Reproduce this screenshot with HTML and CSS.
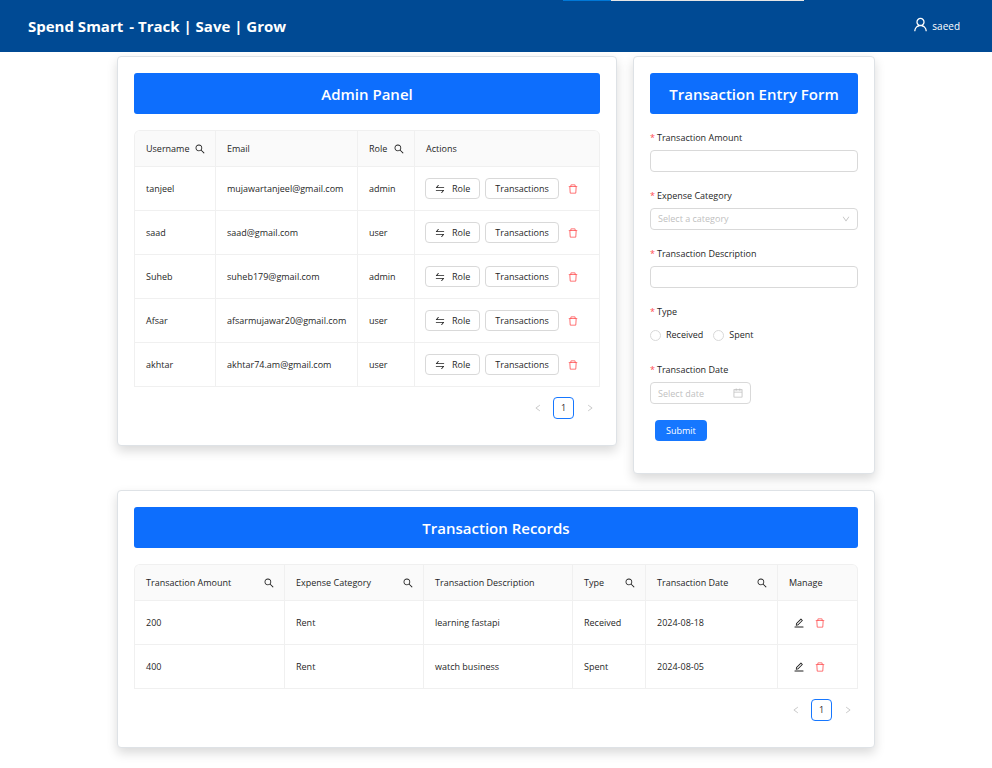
FILE: index.html
```html
<!DOCTYPE html>
<html lang="en">
<head>
<meta charset="utf-8">
<meta name="viewport" content="width=device-width, initial-scale=1">
<title>Spend Smart</title>
<link rel="stylesheet" href="styles.css">
</head>
<body>
<svg class="sprite" aria-hidden="true">
  <symbol id="search" viewBox="64 64 896 896"><path d="M909.6 854.5L649.9 594.8C690.2 542.7 712 479 712 412c0-80.2-31.3-155.4-87.9-212.1-56.6-56.7-132-87.9-212.1-87.9s-155.5 31.3-212.1 87.9C143.2 256.5 112 331.8 112 412c0 80.1 31.3 155.5 87.9 212.1C256.5 680.8 331.8 712 412 712c67 0 130.6-21.8 182.7-62l259.7 259.6a8.2 8.2 0 0011.6 0l43.6-43.5a8.2 8.2 0 000-11.6zM570.4 570.4C528 612.7 471.8 636 412 636s-116-23.3-158.4-65.6C211.3 528 188 471.8 188 412s23.3-116.1 65.6-158.4C296 211.3 352.2 188 412 188s116.1 23.2 158.4 65.6S636 352.2 636 412s-23.3 116.1-65.6 158.4z"/></symbol>
  <symbol id="trash" viewBox="64 64 896 896"><path d="M360 184h-8c4.4 0 8-3.6 8-8v8h304v-8c0 4.4 3.6 8 8 8h-8v72h72v-80c0-35.3-28.7-64-64-64H352c-35.3 0-64 28.7-64 64v80h72v-72zm504 72H160c-17.7 0-32 14.3-32 32v32c0 4.4 3.6 8 8 8h60.4l24.7 523c1.6 34.1 29.8 61 63.9 61h454c34.2 0 62.3-26.8 63.9-61l24.7-523H888c4.4 0 8-3.6 8-8v-32c0-17.7-14.3-32-32-32zM731.3 840H292.7l-24.2-512h487l-24.2 512z"/></symbol>
  <symbol id="swap" viewBox="64 64 896 896"><path d="M847.9 592H152c-4.4 0-8 3.6-8 8v60c0 4.4 3.6 8 8 8h605.2L612.9 851c-4.1 5.2-.4 13 6.3 13h72.5c4.9 0 9.5-2.2 12.6-6.1l168.8-214.1c16.5-21 1.6-51.8-25.2-51.8zM872 356H266.8l144.3-183c4.1-5.2.4-13-6.3-13h-72.5c-4.9 0-9.5 2.2-12.6 6.1L150.9 380.2c-16.5 21-1.6 51.8 25.1 51.8h696c4.4 0 8-3.6 8-8v-60c0-4.4-3.6-8-8-8z"/></symbol>
  <symbol id="edit" viewBox="64 64 896 896"><path d="M257.7 752c2 0 4-.2 6-.5L431.9 722c2-.4 3.9-1.3 5.3-2.8l423.9-423.9a9.96 9.96 0 000-14.1L694.9 114.9c-1.9-1.9-4.4-2.9-7.1-2.9s-5.2 1-7.1 2.9L256.8 538.8c-1.5 1.5-2.4 3.3-2.8 5.3l-29.5 168.2a33.5 33.5 0 009.4 29.8c6.6 6.4 14.9 9.9 23.8 9.9zm67.4-174.4L687.8 215l73.3 73.3-362.7 362.6-88.9 15.7 15.6-89zM880 836H144c-17.7 0-32 14.3-32 32v36c0 4.4 3.6 8 8 8h784c4.4 0 8-3.6 8-8v-36c0-17.7-14.3-32-32-32z"/></symbol>
  <symbol id="user" viewBox="64 64 896 896"><path d="M858.5 763.6a374 374 0 00-80.6-119.5 375.63 375.63 0 00-119.5-80.6c-.4-.2-.8-.3-1.2-.5C719.5 518 760 444.7 760 362c0-137-111-248-248-248S264 225 264 362c0 82.7 40.5 156 102.8 201.1-.4.2-.8.3-1.2.5-44.8 18.9-85 46-119.5 80.6a375.63 375.63 0 00-80.6 119.5A371.7 371.7 0 00136 901.8a8 8 0 008 8.2h60c4.4 0 7.9-3.5 8-7.8 2-77.2 33-149.5 87.8-204.3 56.7-56.7 132-87.9 212.2-87.9s155.5 31.2 212.2 87.9C779 752.7 810 825 812 902.2c.1 4.4 3.6 7.8 8 7.8h60a8 8 0 008-8.2c-1-47.8-10.9-94.3-29.5-138.2zM512 534c-45.9 0-89.1-17.9-121.6-50.4S340 407.9 340 362c0-45.9 17.9-89.1 50.4-121.6S466.1 190 512 190s89.1 17.9 121.6 50.4S684 316.1 684 362c0 45.9-17.9 89.1-50.4 121.6S557.9 534 512 534z"/></symbol>
  <symbol id="left" viewBox="64 64 896 896"><path d="M724 218.3V141c0-6.7-7.7-10.4-12.9-6.3L260.3 486.8a31.86 31.86 0 000 50.3l450.8 352.1c5.3 4.1 12.9.4 12.9-6.3v-77.3c0-4.9-2.3-9.6-6.1-12.6l-360-281 360-281.1c3.8-3 6.1-7.7 6.1-12.6z"/></symbol>
  <symbol id="right" viewBox="64 64 896 896"><path d="M765.7 486.8L314.9 134.7A7.97 7.97 0 00302 141v77.3c0 4.9 2.3 9.6 6.1 12.6l360 281.1-360 281.1c-3.9 3-6.1 7.7-6.1 12.6V883c0 6.7 7.7 10.4 12.9 6.3l450.8-352.1a31.96 31.96 0 000-50.4z"/></symbol>
  <symbol id="down" viewBox="64 64 896 896"><path d="M884 256h-75c-5.1 0-9.9 2.5-12.9 6.6L512 654.2 227.9 262.6c-3-4.1-7.8-6.6-12.9-6.6h-75c-6.5 0-10.3 7.4-6.5 12.7l352.6 486.1c12.8 17.6 39 17.6 51.7 0l352.6-486.1c3.9-5.3.1-12.7-6.4-12.7z"/></symbol>
  <symbol id="calendar" viewBox="64 64 896 896"><path d="M880 184H712v-64c0-4.4-3.6-8-8-8h-56c-4.4 0-8 3.6-8 8v64H384v-64c0-4.4-3.6-8-8-8h-56c-4.4 0-8 3.6-8 8v64H144c-17.7 0-32 14.3-32 32v664c0 17.7 14.3 32 32 32h736c17.7 0 32-14.3 32-32V216c0-17.7-14.3-32-32-32zm-40 656H184V460h656v380zM184 392V256h128v48c0 4.4 3.6 8 8 8h56c4.4 0 8-3.6 8-8v-48h256v48c0 4.4 3.6 8 8 8h56c4.4 0 8-3.6 8-8v-48h128v136H184z"/></symbol>
</svg>

<header class="topbar">
  <div class="load-strip"></div>
  <div class="brand"><span>Spend Smart</span><span>- Track | Save | Grow</span></div>
  <a class="account" href="#"><svg class="icon-user"><use href="#user"/></svg>saeed</a>
</header>

<main class="board">
  <section class="card admin">
    <h2 class="card-title">Admin Panel</h2>
    <table class="grid-table">
      <colgroup><col class="w-username"><col class="w-email"><col class="w-role"><col></colgroup>
      <thead>
        <tr>
          <th><div class="head">Username<button class="find" aria-label="Search username"><svg class="icon"><use href="#search"/></svg></button></div></th>
          <th>Email</th>
          <th><div class="head">Role<button class="find" aria-label="Search role"><svg class="icon"><use href="#search"/></svg></button></div></th>
          <th>Actions</th>
        </tr>
      </thead>
      <tbody>
        <tr><td>tanjeel</td><td>mujawartanjeel@gmail.com</td><td>admin</td><td><div class="actions"><button class="btn"><svg class="icon"><use href="#swap"/></svg>Role</button><button class="btn">Transactions</button><button class="icon-btn danger" aria-label="Delete"><svg class="icon"><use href="#trash"/></svg></button></div></td></tr>
        <tr><td>saad</td><td>saad@gmail.com</td><td>user</td><td><div class="actions"><button class="btn"><svg class="icon"><use href="#swap"/></svg>Role</button><button class="btn">Transactions</button><button class="icon-btn danger" aria-label="Delete"><svg class="icon"><use href="#trash"/></svg></button></div></td></tr>
        <tr><td>Suheb</td><td>suheb179@gmail.com</td><td>admin</td><td><div class="actions"><button class="btn"><svg class="icon"><use href="#swap"/></svg>Role</button><button class="btn">Transactions</button><button class="icon-btn danger" aria-label="Delete"><svg class="icon"><use href="#trash"/></svg></button></div></td></tr>
        <tr><td>Afsar</td><td>afsarmujawar20@gmail.com</td><td>user</td><td><div class="actions"><button class="btn"><svg class="icon"><use href="#swap"/></svg>Role</button><button class="btn">Transactions</button><button class="icon-btn danger" aria-label="Delete"><svg class="icon"><use href="#trash"/></svg></button></div></td></tr>
        <tr><td>akhtar</td><td>akhtar74.am@gmail.com</td><td>user</td><td><div class="actions"><button class="btn"><svg class="icon"><use href="#swap"/></svg>Role</button><button class="btn">Transactions</button><button class="icon-btn danger" aria-label="Delete"><svg class="icon"><use href="#trash"/></svg></button></div></td></tr>
      </tbody>
    </table>
    <nav class="pager" aria-label="Users pages">
      <button class="page-arrow" aria-label="Previous page"><svg class="icon-arrow"><use href="#left"/></svg></button>
      <button class="page-current">1</button>
      <button class="page-arrow" aria-label="Next page"><svg class="icon-arrow"><use href="#right"/></svg></button>
    </nav>
  </section>

  <section class="card entry">
    <h2 class="card-title">Transaction Entry Form</h2>
    <form>
      <div class="field">
        <label class="field-label" for="amount">Transaction Amount</label>
        <input class="control" id="amount" type="text">
      </div>
      <div class="field">
        <label class="field-label" for="category">Expense Category</label>
        <div class="control-wrap">
          <select class="control placeholder" id="category"><option>Select a category</option><option>Rent</option></select>
          <svg class="icon-inside"><use href="#down"/></svg>
        </div>
      </div>
      <div class="field">
        <label class="field-label" for="description">Transaction Description</label>
        <input class="control" id="description" type="text">
      </div>
      <div class="field" role="radiogroup" aria-labelledby="type-label">
        <div class="field-label" id="type-label">Type</div>
        <div class="radios">
          <label class="radio"><input type="radio" name="type">Received</label>
          <label class="radio"><input type="radio" name="type">Spent</label>
        </div>
      </div>
      <div class="field">
        <label class="field-label" for="date">Transaction Date</label>
        <div class="control-wrap date">
          <input class="control" id="date" type="text" placeholder="Select date">
          <svg class="icon-inside"><use href="#calendar"/></svg>
        </div>
      </div>
      <button class="submit" type="submit">Submit</button>
    </form>
  </section>

  <section class="card records">
    <h2 class="card-title">Transaction Records</h2>
    <table class="grid-table">
      <colgroup><col class="w-amount"><col class="w-category"><col class="w-description"><col class="w-type"><col class="w-date"><col></colgroup>
      <thead>
        <tr>
          <th><div class="head">Transaction Amount<button class="find" aria-label="Search amount"><svg class="icon"><use href="#search"/></svg></button></div></th>
          <th><div class="head">Expense Category<button class="find" aria-label="Search category"><svg class="icon"><use href="#search"/></svg></button></div></th>
          <th>Transaction Description</th>
          <th><div class="head">Type<button class="find" aria-label="Search type"><svg class="icon"><use href="#search"/></svg></button></div></th>
          <th><div class="head">Transaction Date<button class="find" aria-label="Search date"><svg class="icon"><use href="#search"/></svg></button></div></th>
          <th>Manage</th>
        </tr>
      </thead>
      <tbody>
        <tr><td>200</td><td>Rent</td><td>learning fastapi</td><td>Received</td><td>2024-08-18</td><td><div class="manage"><button class="icon-btn" aria-label="Edit"><svg class="icon"><use href="#edit"/></svg></button><button class="icon-btn danger" aria-label="Delete"><svg class="icon"><use href="#trash"/></svg></button></div></td></tr>
        <tr><td>400</td><td>Rent</td><td>watch business</td><td>Spent</td><td>2024-08-05</td><td><div class="manage"><button class="icon-btn" aria-label="Edit"><svg class="icon"><use href="#edit"/></svg></button><button class="icon-btn danger" aria-label="Delete"><svg class="icon"><use href="#trash"/></svg></button></div></td></tr>
      </tbody>
    </table>
    <nav class="pager" aria-label="Records pages">
      <button class="page-arrow" aria-label="Previous page"><svg class="icon-arrow"><use href="#left"/></svg></button>
      <button class="page-current">1</button>
      <button class="page-arrow" aria-label="Next page"><svg class="icon-arrow"><use href="#right"/></svg></button>
    </nav>
  </section>
</main>
</body>
</html>
```
FILE: styles.css
```css
* { box-sizing: border-box; }

body {
  margin: 0;
  background: #fff;
  color: #1f1f1f;
  font: 9px/16px "Segoe UI", "Open Sans", "Noto Sans", sans-serif;
}

button, input, select { font: inherit; color: inherit; }
button { cursor: pointer; padding: 0; border: 0; background: none; }
svg { display: block; fill: currentColor; flex: none; }
.sprite { position: absolute; width: 0; height: 0; }
.icon { width: 10px; height: 10px; }
.icon-arrow { width: 8px; height: 8px; }

/* Header */
.topbar {
  position: relative;
  display: flex;
  align-items: center;
  justify-content: space-between;
  min-height: 52px;
  padding: 0 32px 0 28px;
  background: #004a94;
  color: #fff;
}
.load-strip {
  position: absolute;
  top: 0;
  left: 563px;
  width: 241px;
  height: 1px;
  background: linear-gradient(to right, #0078d7 48px, #e6e6e6 48px);
}
.brand { display: flex; gap: 6px; font-size: 15px; font-weight: 700; line-height: 24px; }
.account { display: flex; align-items: center; gap: 4px; color: #fff; font-size: 10px; text-decoration: none; }
.icon-user { width: 15px; height: 15px; margin-bottom: 4px; }

/* Cards */
.board {
  display: grid;
  grid-template-columns: repeat(3, 1fr);
  align-items: start;
  gap: 16px;
  max-width: 758px;
  margin: 4px auto 20px;
}
.card {
  min-width: 0;
  padding: 16px;
  border: 1px solid #dee2e6;
  border-radius: 4px;
  background: #fff;
  box-shadow: 0 5px 11px rgba(0, 0, 0, .15);
}
.admin { grid-column: span 2; }
.records { grid-column: 1 / -1; }
.card-title {
  margin: 0 0 16px;
  padding: 11px 8px 9px;
  border-radius: 3px;
  background: #0d6efd;
  color: #fff;
  font-size: 15px;
  font-weight: 600;
  line-height: 21px;
  text-align: center;
}

/* Tables */
.grid-table {
  width: 100%;
  table-layout: fixed;
  border-collapse: separate;
  border-spacing: 0;
  border: solid #f0f0f0;
  border-width: 1px 0 0 1px;
  border-radius: 6px 6px 0 0;
}
.grid-table th, .grid-table td {
  height: 44px;
  padding: 0 10px 0 11px;
  border: solid #f0f0f0;
  border-width: 0 1px 1px 0;
  font-weight: 400;
  text-align: left;
  white-space: nowrap;
}
.grid-table th { height: 36px; background: #fafafa; }
.grid-table th:first-child { border-top-left-radius: 5px; }
.grid-table th:last-child { border-top-right-radius: 5px; }
.grid-table td:last-child { padding-left: 10px; }
.w-username { width: 81px; }
.w-email { width: 142px; }
.w-role { width: 57px; }
.w-amount { width: 150px; }
.w-category { width: 139px; }
.w-description { width: 149px; }
.w-type { width: 73px; }
.w-date { width: 132px; }
.head { display: flex; align-items: center; justify-content: space-between; }

.actions { display: flex; gap: 5px; }
.manage { display: flex; }
.btn {
  display: flex;
  align-items: center;
  gap: 7px;
  height: 21px;
  padding: 0 9px;
  border: 1px solid #d9d9d9;
  border-radius: 4px;
  background: #fff;
}
.icon-btn { display: grid; place-items: center; width: 21px; height: 21px; }
.danger { color: #ff4d4f; }
.actions .icon-btn { margin-left: -1px; }

.pager { display: flex; justify-content: flex-end; gap: 5px; margin: 10px 0; }
.page-arrow, .page-current { display: grid; place-items: center; width: 21px; height: 22px; }
.page-arrow { color: #bfbfbf; }
.page-current { border: 1px solid #1677ff; border-radius: 4px; }

/* Form */
.field { margin-bottom: 16px; }
.field-label { display: block; padding-bottom: 4px; }
.field-label::before { content: "*"; margin-right: 2px; color: #ff4d4f; }
.control {
  display: block;
  width: 100%;
  height: 22px;
  padding: 0 7px;
  border: 1px solid #d9d9d9;
  border-radius: 4px;
  background: #fff;
  appearance: none;
}
.control::placeholder { color: #bfbfbf; }
.placeholder { color: #bfbfbf; }
.control-wrap { position: relative; }
.icon-inside { position: absolute; top: 7px; right: 8px; width: 8px; height: 8px; color: #bfbfbf; pointer-events: none; }
.date { width: 101px; }
.date .icon-inside { top: 6px; width: 10px; height: 10px; }
.radios { display: flex; gap: 10px; height: 22px; align-items: center; }
.radio { display: flex; align-items: center; gap: 5px; }
.radio input { appearance: none; width: 11px; height: 11px; margin: 0; border: 1px solid #d9d9d9; border-radius: 50%; }
.radio input:checked { border: 3px solid #1677ff; }
.submit {
  display: block;
  height: 21px;
  margin: 0 5px 16px;
  padding: 0 11px;
  border-radius: 4px;
  background: #1677ff;
  color: #fff;
}
```
